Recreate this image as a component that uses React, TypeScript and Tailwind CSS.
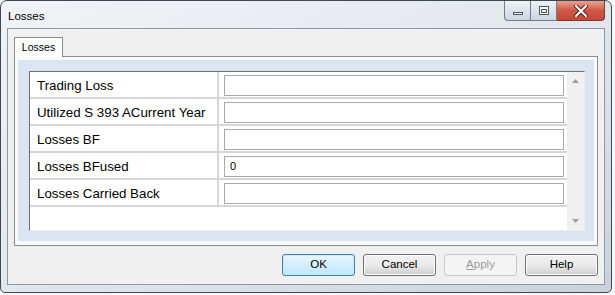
import React from 'react';

const rows = [
  { label: 'Trading Loss', value: '' },
  { label: 'Utilized S 393 ACurrent Year', value: '' },
  { label: 'Losses BF', value: '' },
  { label: 'Losses BFused', value: '0' },
  { label: 'Losses Carried Back', value: '' },
];

const CaptionButtons: React.FC = () => (
  <div className="flex h-[20px] self-start mr-[6px]">
    {/* minimize */}
    <div className="w-[27px] h-[20px] rounded-bl-[4px] border border-t-0 border-[#707e8e] bg-gradient-to-b from-[#eef2f6] to-[#cdd6e0] flex items-end justify-center pb-[5px]">
      <div className="w-[10px] h-[3px] border border-[#4d5763] bg-white" />
    </div>
    {/* maximize */}
    <div className="w-[26px] h-[20px] border-b border-r border-[#707e8e] bg-gradient-to-b from-[#eef2f6] to-[#cdd6e0] flex items-center justify-center">
      <div className="w-[10px] h-[9px] border border-[#4d5763] bg-white flex items-center justify-center">
        <div className="w-[6px] h-[4px] border border-[#4d5763] mt-[1px]" />
      </div>
    </div>
    {/* close */}
    <div className="w-[48px] h-[20px] rounded-br-[4px] border-b border-r border-[#7a3a32] bg-gradient-to-b from-[#e8a293] via-[#cf5745] to-[#c5463a] flex items-center justify-center">
      <svg width="14" height="12" viewBox="0 0 14 12">
        <path d="M2 1 L12 11 M12 1 L2 11" stroke="#4a1a14" strokeWidth="4" strokeLinecap="round" />
        <path d="M2 1 L12 11 M12 1 L2 11" stroke="#ffffff" strokeWidth="2.2" strokeLinecap="round" />
      </svg>
    </div>
  </div>
);

const DialogButton: React.FC<{ label: string; primary?: boolean; disabled?: boolean }> = ({
  label,
  primary,
  disabled,
}) => (
  <div
    className={`w-[73px] h-[22px] rounded-[3px] border flex items-center justify-center text-[11.5px] ${
      primary
        ? 'border-[#3c7fb1] bg-gradient-to-b from-[#eaf6fd] to-[#bee6fd] text-black shadow-[inset_0_0_0_1px_#c5ecff]'
        : disabled
        ? 'border-[#c8c8c8] bg-[#f4f4f4] text-[#9b9b9b]'
        : 'border-[#707070] bg-gradient-to-b from-[#f2f2f2] via-[#ebebeb] to-[#cfcfcf] text-black shadow-[inset_0_0_0_1px_#fcfcfc]'
    }`}
  >
    {label === 'Apply' ? (
      <span>
        <span className="underline">A</span>pply
      </span>
    ) : (
      label
    )}
  </div>
);

export default function App() {
  return (
    <div
      className="w-[615px] h-[295px] bg-[#f7f7f7] overflow-hidden"
      style={{ fontFamily: '"Liberation Sans", Arial, sans-serif' }}
    >
      {/* Window frame */}
      <div className="w-[612px] h-[293px] rounded-t-[7px] rounded-b-[5px] border border-[#3e4854] bg-gradient-to-br from-[#f1f3f6] via-[#e2e7ec] to-[#c9d2dc] flex flex-col">
        {/* Title bar */}
        <div className="h-[27px] flex items-start justify-between">
          <span className="pl-[7px] pt-[7px] text-[11.5px] text-black">Losses</span>
          <CaptionButtons />
        </div>

        {/* Client area */}
        <div className="flex-1 mx-[6px] mb-[7px] border border-[#8c99a6] bg-[#f0f0f0] flex flex-col">
          {/* Tab strip */}
          <div className="pl-[6px] pt-[8px] flex">
            <div className="w-[49px] h-[20px] border border-b-0 border-[#898c95] bg-white flex items-center justify-center text-[10.5px] text-black -mb-px relative z-10">
              Losses
            </div>
          </div>

          {/* Tab page */}
          <div className="mx-[6px] h-[190px] border border-[#898c95] bg-[#f9fafc] pt-[3px] px-[3px] pb-[4px] flex">
            <div className="flex-1 bg-[#dbe4f1] pt-[11px] pl-[11px] pr-[9px] pb-[10px] flex">
              {/* Grid */}
              <div className="flex-1 bg-white border-t border-l border-[#6f6f6f] border-r border-b border-r-[#ececec] border-b-[#ececec] flex">
                <div className="flex-1 flex flex-col">
                  {rows.map((row) => (
                    <div key={row.label} className="h-[27px] flex border-b-2 border-[#d6d6d6]">
                      <div className="w-[189px] border-r-2 border-[#d6d6d6] pl-[7px] pt-[2px] flex items-center text-[13.3px] text-black">
                        {row.label}
                      </div>
                      <div className="flex-1 pl-[5px] pr-[3px] pt-[3px]">
                        <div className="h-[21px] border border-[#a9a9a9] bg-white flex items-center pl-[5px] text-[11px] text-black">
                          {row.value}
                        </div>
                      </div>
                    </div>
                  ))}
                </div>
                {/* Scrollbar */}
                <div className="w-[17px] bg-[#f0f0f0] flex flex-col items-center justify-between py-[7px]">
                  <svg width="7" height="4" viewBox="0 0 7 4">
                    <path d="M0 4 L3.5 0 L7 4 Z" fill="#9c9c9c" />
                  </svg>
                  <svg width="7" height="4" viewBox="0 0 7 4">
                    <path d="M0 0 L3.5 4 L7 0 Z" fill="#9c9c9c" />
                  </svg>
                </div>
              </div>
            </div>
          </div>

          {/* Buttons */}
          <div className="flex justify-end gap-[8px] pr-[6px] mt-[8px]">
            <DialogButton label="OK" primary />
            <DialogButton label="Cancel" />
            <DialogButton label="Apply" disabled />
            <DialogButton label="Help" />
          </div>
        </div>
      </div>
    </div>
  );
}
